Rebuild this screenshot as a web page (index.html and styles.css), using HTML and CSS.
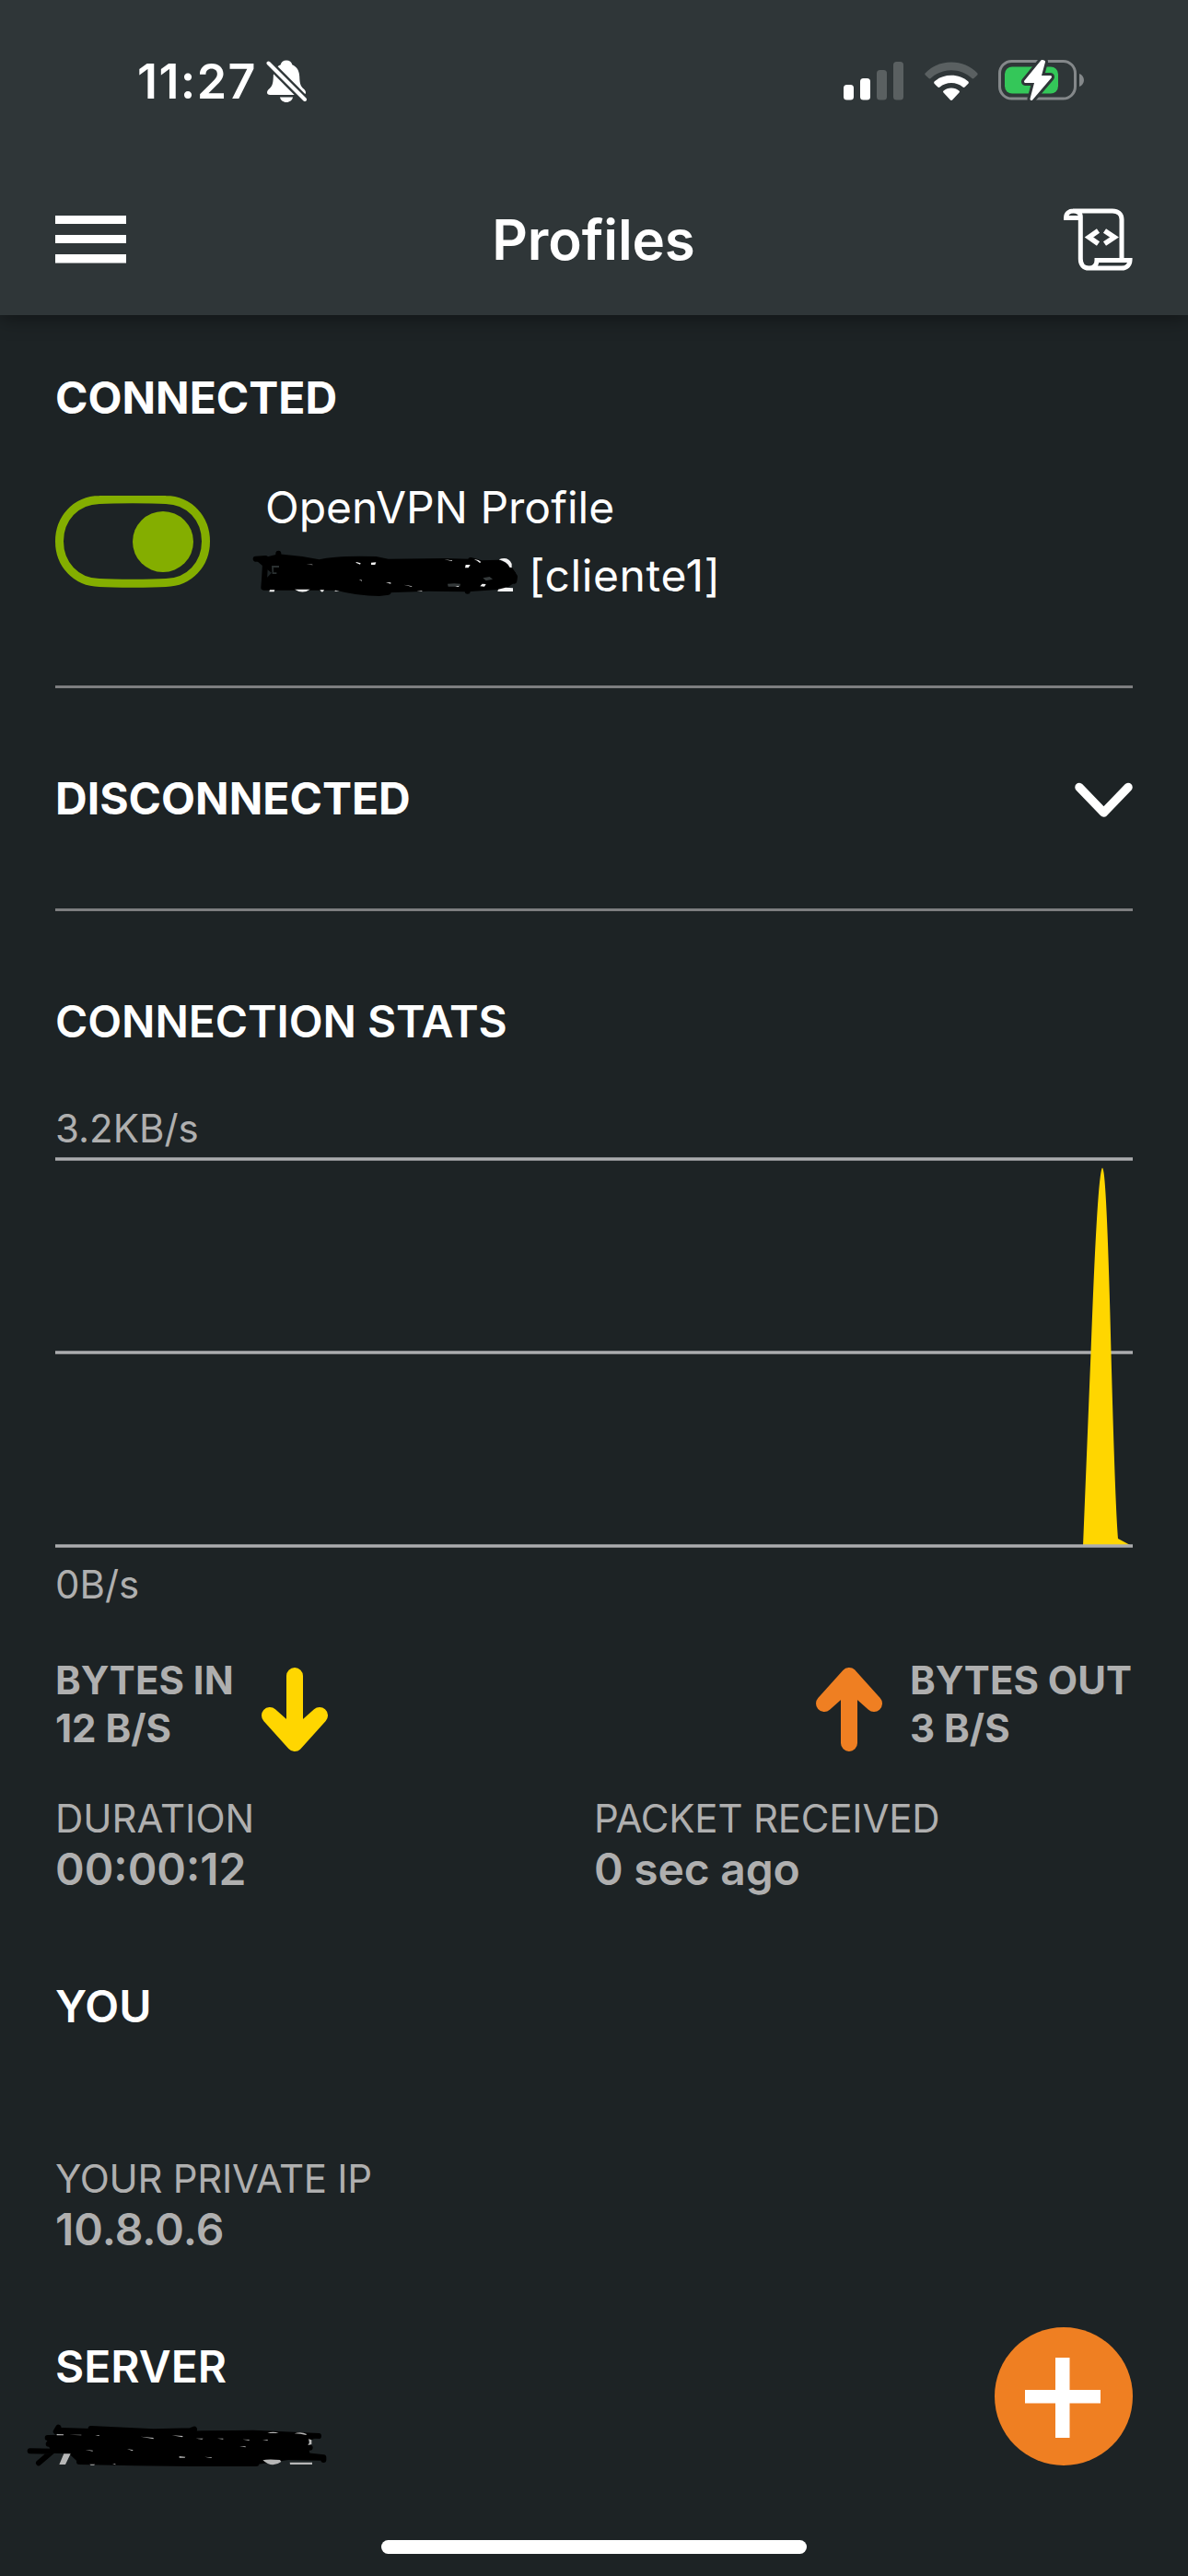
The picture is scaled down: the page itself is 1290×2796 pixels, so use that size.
FILE: index.html
```html
<!DOCTYPE html>
<html lang="en">
<head>
<meta charset="utf-8">
<title>Profiles</title>
<link rel="stylesheet" href="styles.css">
</head>
<body>
<header class="header">
  <div class="status-bar">
    <div class="status-left">
      <span class="time">11:27</span>
      <svg width="44" height="48" viewBox="0 0 44 48">
        <path fill="#fff" d="M22 1.500c-3.300 0-5.700 2-6.300 4.800-5.400 2.400-7.700 7-7.900 12.700-.3 8.500-1.300 10.500-4.600 13.500C1.700 33.900 1 35.100 1 36.300 1 38 2.200 39 4.200 39h35.600c2 0 3.200-1 3.200-2.700 0-1.200-.7-2.400-2.200-3.800-3.300-3-4.300-5-4.600-13.500-.2-5.700-2.500-10.300-7.900-12.700-.6-2.800-3-4.800-6.300-4.800zM15 41.500h14c-.6 3.200-3.500 5.500-7 5.500s-6.400-2.300-7-5.500z"/>
        <path class="knockout" d="M2.500 4.500l39.500 39.500" stroke-width="9"/>
        <path d="M2.500 4.500l39.500 39.500" stroke="#fff" stroke-width="4" stroke-linecap="round"/>
      </svg>
    </div>
    <div class="status-right">
      <svg width="65" height="42" viewBox="0 0 65 42">
        <rect x="0" y="25" width="11" height="16.500" rx="3.500" fill="#fff"/>
        <rect x="18" y="18" width="11" height="23.500" rx="3.500" fill="#fff"/>
        <rect x="36" y="9" width="11" height="32.500" rx="3.500" fill="#5a6061"/>
        <rect x="54" y="0" width="11" height="41.500" rx="3.500" fill="#5a6061"/>
      </svg>
      <svg class="wifi" width="58" height="43" viewBox="0 0 58 43">
        <path fill="#5a6061" d="M.8 14.500a1.600 1.600 0 0 1 0-2.200C8.200 4.700 18 .5 29 .5s20.800 4.200 28.200 11.800c.6.600.6 1.600 0 2.200L53.500 18c-.6.600-1.500.6-2.100 0C45.300 12.200 37.500 9.200 29 9.200S12.700 12.200 6.600 18c-.6.600-1.500.6-2.100 0z"/>
        <path fill="#fff" d="M10.600 23.700c-.6-.6-.6-1.500 0-2.100C15.500 17 22 14.800 29 14.800s13.500 2.200 18.400 6.800c.6.600.6 1.500 0 2.100l-3.800 3.900c-.6.600-1.500.6-2.100 0-3.400-3-7.700-4.500-12.500-4.500s-9.100 1.500-12.500 4.500c-.6.600-1.500.6-2.100 0z"/>
        <path fill="#fff" d="M20.500 33.600c-.6-.6-.6-1.500.1-2.100 2.300-2 5.200-3 8.400-3s6.100 1 8.400 3c.7.600.7 1.500.1 2.100l-7.400 7.900c-.6.600-1.600.6-2.200 0z"/>
      </svg>
      <svg class="battery" width="94" height="48" viewBox="0 0 94 48">
        <rect x="1.500" y="3.500" width="82" height="40.500" rx="13" fill="none" stroke="#84888a" stroke-width="3"/>
        <path d="M88 17v14c3-1 5-4 5-7s-2-6-5-7z" fill="#84888a"/>
        <rect x="7" y="9.500" width="58" height="29" rx="8" fill="#34c759"/>
        <path class="knockout" d="M47.500 3.500L29.500 25.500H41L36 44.500L56.500 20.500H45L49.500 4z" stroke-width="9" stroke-linejoin="round"/>
        <path fill="#fff" stroke="#fff" stroke-width="3" stroke-linejoin="round" d="M47.500 3.500L29.500 25.500H41L36 44.500L56.500 20.500H45L49.500 4z"/>
      </svg>
    </div>
  </div>
  <nav class="nav-bar">
    <svg width="77" height="52" viewBox="0 0 77 52"><path fill="#fff" d="M0 0h77v9H0zM0 21h77v9H0zM0 42h77v9.500H0z"/></svg>
    <h1 class="title">Profiles</h1>
    <svg width="75" height="68" viewBox="0 0 75 68" fill="none" stroke="#fff" stroke-width="5">
      <path d="M10 3H53c6 0 10 3.500 10 9V54.500M2.500 10.500h15.800V9C18.300 5.500 15 3 10.500 3 6 3 2.500 5.500 2.500 10.500zM18.300 9V55c0 6.500 3.500 10 9 10S36 61.500 36 56.500H72c-.2 5-3.500 8.500-9 8.500H27.500"/>
      <path d="M37.500 24.500L27.500 31.500L37.500 38.500M44.500 24.500L55 31.500L44.500 38.500" stroke-width="5.500"/>
    </svg>
  </nav>
</header>

<main class="content">
  <h2 class="heading bold">CONNECTED</h2>
  <section class="profile">
    <svg width="168" height="100" viewBox="0 0 168 100">
      <path d="M48 4.500C64 3.500 104 3.500 120 4.500C146 5 163.500 25 163.500 49.500S146 94 120 94.500C104 95.500 64 95.500 48 94.500C22 94 4.500 74 4.500 49.500S22 5 48 4.500z" fill="none" stroke="#84ae00" stroke-width="9"/>
      <circle cx="117" cy="50" r="33" fill="#84ae00"/>
    </svg>
    <div class="profile-text">
      <p class="line">OpenVPN Profile</p>
      <div class="line">
        <svg class="host-mask" width="300" height="65" viewBox="0 0 900 195">
          <path d="M34 50L68 45L112 34L190 42L245 52Q300 38 430 42L470 50L650 48L735 50L775 58L830 55L862 68L885 95L884 125L860 142L825 150L722 157L600 155L470 160L440 162Q370 160 300 145L64 143L68 118L90 95L70 80Z"/>
          <g fill="none" stroke="#000" stroke-width="18" stroke-linecap="round" stroke-linejoin="round">
            <path d="M38 50L70 48L66 118L64 143H300Q370 162 440 162L470 158M112 32V60M738 54L775 64L830 62L862 78L882 108L880 122M728 155V135L840 140L858 120"/>
          </g>
          <path d="M90 72h24v6h-18v16h10v5h-14z" fill="#2a3031"/>
          <path d="M663 131q22-3 42 0l-2 9h-38zM778 112l22-4 10 8-22 5z" fill="#34393a"/>
          <path d="M84 151h16l-2 6H82zM165 149h50q-24 17-50 0zM247 151h14q-6 13-14 0zM297 152l14 3h-16zM366 60l14 4-2 4-14-6zM414 62l16-1-3 8h-13zM203 66l20 2v2zM652 52l26 3v2zM722 69h15l-6 10h-11zM750 52q14-1 22 8l-4 3q-8-7-18-11zM830 52q30-12 42 14v13l-7-2q-8-18-35-25zM776 131l12 1-5 8-14-1zM828 149l24-6 24 2v11h-50zM462 127h16v4zM374 117l10 2v3zM520 134l28 5-3 1zM562 153l18 1v2zM688 138h12l-2 3z" fill="#f2f2f2"/>
        </svg>
        <span class="client">[cliente1]</span>
      </div>
    </div>
  </section>

  <section class="collapsed">
    <h2 class="heading bold">DISCONNECTED</h2>
    <svg class="chevron" width="63" height="40" viewBox="0 0 63 40"><path d="M5 5.500L31.500 33L58 5.500" fill="none" stroke="#fff" stroke-width="9.500" stroke-linecap="round" stroke-linejoin="round"/></svg>
  </section>

  <section class="stats">
    <h2 class="heading stats-title">CONNECTION STATS</h2>
    <p class="label axis-top">3.2KB/s</p>
    <svg class="chart" width="1170" height="426" viewBox="0 0 1170 426">
      <path d="M0 2H1170M0 212H1170" stroke="#abacae" stroke-width="3.400"/>
      <path d="M1116 422L1124.500 212Q1131 34 1136 14Q1137 9 1138 14Q1142 30 1146.500 212Q1151 380 1154 414L1169 422z" fill="#ffd600"/>
      <path d="M0 422H1170" stroke="#abacae" stroke-width="3.400"/>
    </svg>
    <p class="label axis-bottom">0B/s</p>
    <div class="rates">
      <div class="rate">
        <p>BYTES IN<br>12 B/S</p>
        <svg width="72" height="91" viewBox="0 0 72 91"><path d="M36 9V78M9 52L36 82L63 52L36 76z" fill="none" stroke="#ffd600" stroke-width="18" stroke-linecap="round" stroke-linejoin="round"/></svg>
      </div>
      <div class="rate rate-out">
        <svg width="72" height="91" viewBox="0 0 72 91"><path d="M36 82V13M9 39L36 9L63 39L36 15z" fill="none" stroke="#ef7f22" stroke-width="18" stroke-linecap="round" stroke-linejoin="round"/></svg>
        <p>BYTES OUT<br>3 B/S</p>
      </div>
    </div>
    <div class="details">
      <div>
        <p class="label">DURATION</p>
        <p class="value">00:00:12</p>
      </div>
      <div>
        <p class="label packet">PACKET RECEIVED</p>
        <p class="value packet">0 sec ago</p>
      </div>
    </div>
  </section>

  <section class="you">
    <h2 class="heading">YOU</h2>
    <p class="label ip">YOUR PRIVATE IP</p>
    <p class="value">10.8.0.6</p>
  </section>

  <section class="server">
    <h2 class="heading">SERVER</h2>
    <svg class="server-mask" width="345" height="70" viewBox="0 0 1035 210">
      <path d="M122 44L235 48L360 52L560 55L600 60L760 58L800 70L980 72L945 90V112L950 132L995 138L990 152L880 150L775 165L600 163L380 165L195 158L165 130L110 128L95 98L92 78L130 68Z"/>
      <g fill="none" stroke="#000" stroke-width="18" stroke-linecap="round" stroke-linejoin="round">
        <path d="M38 121L110 122L66 160M130 44L122 58M236 48L440 58L560 55L573 50M95 78L300 76L600 64L765 62L978 72M98 98L400 96L950 110M198 156L380 160L560 162L775 162M700 140L940 136L994 142V150"/>
      </g>
      <path d="M148 130h22l-17 35h-20zM796 151q16-5 56-1l4 6q-30 22-60-5zM884 158h73v7h-72zM811 63q18-7 37 0zM899 64q22-8 40 2l-2 3q-18-5-38-5zM945 82l10 3v14l-12 3 5-8zM125 66l22 1v3h-22zM165 68h40v2zM250 69h13v3zM398 74l42 4v4zM500 70l36 2-2 4zM354 114l20 4-3 3zM218 117l24 2v3zM524 138l20 2-2 3h-18zM606 140l25 2-3 2zM578 80h24l-4 3zM648 80h19v3zM730 83l22 1v3zM795 84h18l-2 3zM720 106h20v3zM232 164h18l-4 3h-10zM306 163h10v3z" fill="#b7b7b7"/>
    </svg>
  </section>
</main>

<button class="fab" aria-label="Add profile">
  <svg width="83" height="88" viewBox="0 0 83 88"><path d="M33 0h15.500v35H82v14.500H48.500V87H33V49.500H0V35h33z" fill="#fff"/></svg>
</button>
<div class="home-indicator"></div>
</body>
</html>
```
FILE: styles.css
```css
* {
  box-sizing: border-box;
  margin: 0;
  padding: 0;
}

body {
  position: relative;
  width: 1290px;
  height: 2796px;
  overflow: hidden;
  background: #1d2325;
  color: #fff;
  font-family: Inter, "Liberation Sans", sans-serif;
  white-space: nowrap;
}

svg {
  display: block;
  flex: none;
}

.header {
  height: 342px;
  background: #2f3638;
  box-shadow: 0 4px 20px rgba(0, 0, 0, 0.4);
}

.knockout {
  fill: #2f3638;
  stroke: #2f3638;
}

.status-bar {
  display: flex;
  justify-content: space-between;
  align-items: center;
  height: 178px;
  padding: 0 112px 2px 149px;
}

.status-left,
.status-right {
  display: flex;
  align-items: center;
}

.status-left {
  gap: 10px;
}

.time {
  font-size: 52px;
  font-weight: 600;
  letter-spacing: 1.4px;
}

.wifi {
  margin: 0 22px 0 23px;
}

.battery {
  margin-top: -3px;
}

.nav-bar {
  display: flex;
  justify-content: space-between;
  align-items: center;
  height: 164px;
  padding: 0 60px;
}

.title {
  padding-right: 3px;
  font-size: 60px;
  font-weight: 600;
  letter-spacing: -0.1px;
}

.content {
  padding: 60px 60px 0;
}

.heading {
  font-size: 48px;
  line-height: 60px;
  font-weight: 600;
}

.bold {
  font-weight: 700;
}

.profile {
  display: flex;
  align-items: center;
  gap: 60px;
  margin-top: 52px;
  padding-bottom: 82px;
}

.line {
  display: flex;
  align-items: center;
  font-size: 48px;
  line-height: 74px;
}

.host-mask {
  margin: -6px -13px 0 -23px;
}

.client {
  margin-left: 22px;
  letter-spacing: 0.6px;
}

.collapsed {
  display: flex;
  justify-content: space-between;
  align-items: center;
  height: 245px;
  border-top: 3px solid #7d7e80;
  border-bottom: 3px solid #7d7e80;
}

.chevron {
  margin-top: 4px;
}

.stats {
  padding-top: 90px;
}

.stats-title {
  letter-spacing: -0.1px;
}

.label {
  color: #afafaf;
  font-size: 42px;
  line-height: 52px;
}

.axis-top {
  margin-top: 60px;
}

.chart {
  margin-top: 5px;
}

.axis-bottom {
  margin-top: 12px;
}

.rates {
  display: flex;
  justify-content: space-between;
  margin-top: 52px;
  color: #afafaf;
  font-size: 42px;
  font-weight: 700;
  line-height: 51.5px;
}

.rate {
  display: flex;
  align-items: flex-end;
  gap: 30px;
}

.rate-out {
  margin-right: 1px;
}

.details {
  display: grid;
  grid-template-columns: 1fr 1fr;
  margin-top: 47px;
}

.value {
  color: #afafaf;
  font-size: 48px;
  font-weight: 600;
  line-height: 58px;
}

.packet {
  letter-spacing: -0.2px;
}

.you {
  padding-top: 90px;
}

.ip {
  margin-top: 131px;
  letter-spacing: -0.3px;
}

.server {
  padding-top: 90px;
}

.server-mask {
  margin: 21px 0 0 -40px;
}

.fab {
  position: absolute;
  right: 60px;
  bottom: 120px;
  display: flex;
  align-items: center;
  justify-content: center;
  width: 150px;
  height: 150px;
  padding: 3px 1px 0 0;
  border: 0;
  border-radius: 50%;
  background: #ef7f22;
}

.home-indicator {
  position: absolute;
  bottom: 24px;
  left: 414px;
  width: 462px;
  height: 15px;
  border-radius: 8px;
  background: #fff;
}
```
